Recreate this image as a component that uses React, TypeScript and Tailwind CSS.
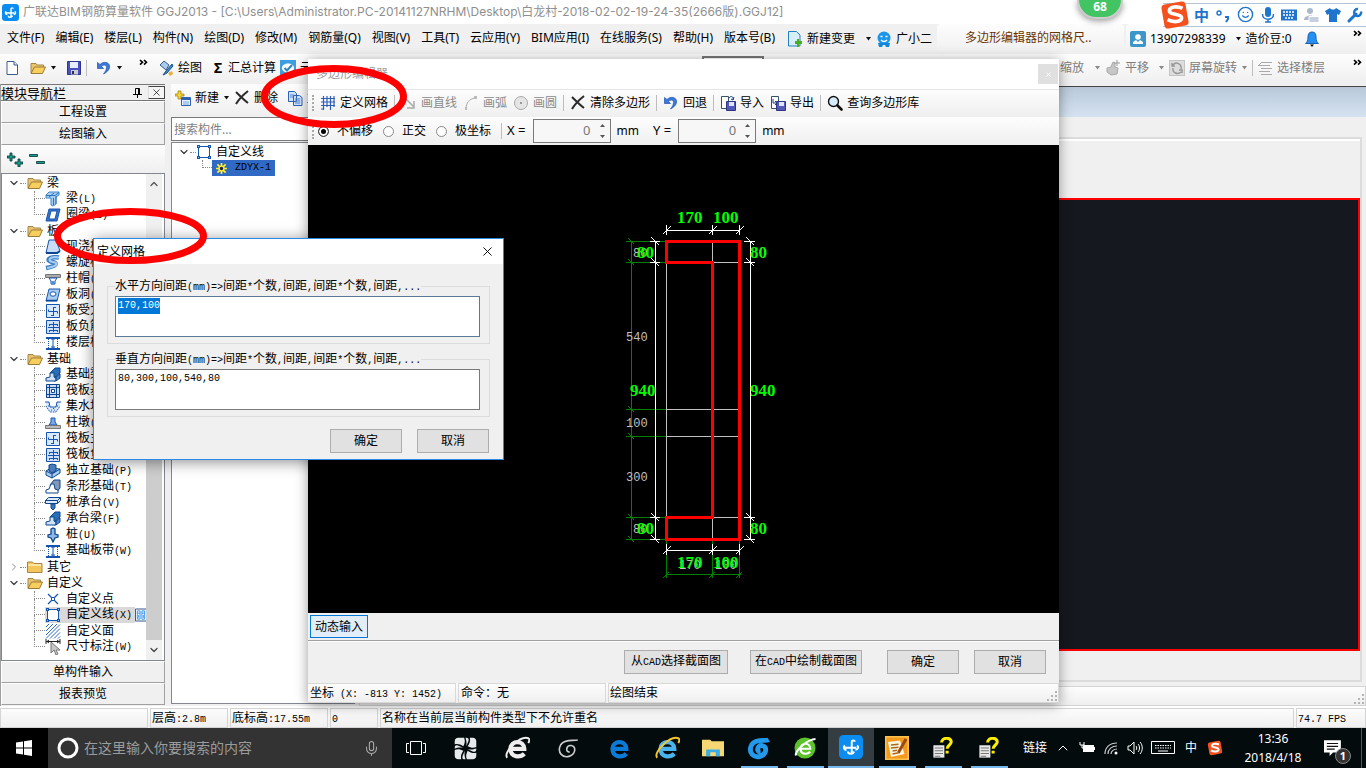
import { useEffect, useRef, useState } from "react";
import type { ReactNode } from "react";
import {
  ChevronDown,
  ChevronRight,
  ChevronUp,
  Mic,
  Smile,
  X,
} from "lucide-react";

type Row = {
  label: string;
  icon?: string;
  open?: boolean;
  last?: boolean;
  selected?: boolean;
};

const treeRows: Row[] = [
  { label: "梁", open: true },
  { label: "梁(L)", icon: "beam" },
  { label: "圈梁(E)", icon: "ring", last: true },
  { label: "板", open: true },
  { label: "现浇板(B)", icon: "slab" },
  { label: "螺旋板(B)", icon: "spiral" },
  { label: "柱帽(V)", icon: "cap" },
  { label: "板洞(N)", icon: "hole" },
  { label: "板受力筋(S)", icon: "rebar" },
  { label: "板负筋(F)", icon: "rebar2" },
  { label: "楼层板带(H)", icon: "strip", last: true },
  { label: "基础", open: true },
  { label: "基础梁(F)", icon: "fbeam" },
  { label: "筏板基础(M)", icon: "raft" },
  { label: "集水坑(K)", icon: "pit" },
  { label: "柱墩(Y)", icon: "pier" },
  { label: "筏板主筋(R)", icon: "rebar" },
  { label: "筏板负筋(X)", icon: "rebar2" },
  { label: "独立基础(P)", icon: "pad" },
  { label: "条形基础(T)", icon: "stripbase" },
  { label: "桩承台(V)", icon: "pilecap" },
  { label: "承台梁(F)", icon: "fbeam" },
  { label: "桩(U)", icon: "pile" },
  { label: "基础板带(W)", icon: "strip", last: true },
  { label: "其它", open: false },
  { label: "自定义", open: true },
  { label: "自定义点", icon: "point" },
  { label: "自定义线(X)", icon: "line", selected: true },
  { label: "自定义面", icon: "area" },
  { label: "尺寸标注(W)", icon: "dim", last: true },
];

const menus = [
  "文件(F)",
  "编辑(E)",
  "楼层(L)",
  "构件(N)",
  "绘图(D)",
  "修改(M)",
  "钢筋量(Q)",
  "视图(V)",
  "工具(T)",
  "云应用(Y)",
  "BIM应用(I)",
  "在线服务(S)",
  "帮助(H)",
  "版本号(B)",
];

const bar = "bg-linear-to-b from-[#fdfdfd] to-[#efefef]";
const pushButton =
  "h-6 border border-[#adadad] bg-[#e1e1e1] text-center text-xs leading-5";

// Latin runs are set in a narrower fixed width face, half of a Chinese character
const Song = ({ text }: { text: string }) => (
  <>
    {text.split(/([\x20-\x7e]+)/).map((part, i) =>
      i % 2 ? (
        <span
          key={i}
          className="font-['Liberation_Mono',monospace] text-[10px] whitespace-pre"
        >
          {part}
        </span>
      ) : (
        part
      )
    )}
  </>
);

const Svg = ({ children, size = 16 }: { children: ReactNode; size?: number }) => (
  <svg
    width={size}
    height={size}
    viewBox="0 0 16 16"
    fill="none"
    className="shrink-0"
    aria-hidden="true"
  >
    {children}
  </svg>
);

const Caret = ({ color = "#111" }: { color?: string }) => (
  <svg width="7" height="4" viewBox="0 0 7 4" className="shrink-0" aria-hidden="true">
    <path d="M1 0h5L3.5 3.5z" fill={color} />
  </svg>
);

const Divider = () => <span className="h-4 w-px shrink-0 bg-[#bdbdbd]" />;

const More = () => (
  <svg width="9" height="7" viewBox="0 0 9 7" fill="none" stroke="#000" strokeWidth="1.6" className="shrink-0" aria-hidden="true">
    <path d="M1 1l2.5 2.3L1 5.6M5 1l2.500 2.300L5 5.600" />
  </svg>
);

const Folder = ({ open }: { open?: boolean }) => (
  <Svg>
    {open ? (
      <>
        <path d="M1 13V3.500h5l1 1.500h6.500v3" fill="#e8c46a" stroke="#a5854a" />
        <path d="M1 13.500L4.500 7H15.500L12.500 13.500z" fill="#f8cf5a" stroke="#9a7b3c" />
      </>
    ) : (
      <>
        <path d="M.5 13.500V3h5L7 4.500h8v9z" fill="#f2c65a" stroke="#a5854a" />
        <path d="M1.500 6h12.500" stroke="#fff0b8" strokeWidth="1.500" />
      </>
    )}
  </Svg>
);

const NodeIcon = ({ name }: { name: string }) => {
  const b = "#1555b0";
  const l = "#a9ccf2";
  switch (name) {
    case "beam":
      return (
        <Svg>
          <path d="M1 4l3-3h10v3l-3 2v7l-3 2-2-1V7H1z" fill={l} stroke="#3d87c8" />
          <path d="M1 4.500h9l4-3M4 6l5-4M8.500 7v7M11 5v8" stroke="#2c73bb" />
        </Svg>
      );
    case "ring":
      return (
        <Svg>
          <path d="M4 2h11l-3 12H1z" fill="#3b72c4" stroke={b} />
          <path d="M6 4h6l-2 8H4z" fill="#fff" stroke={b} />
        </Svg>
      );
    case "slab":
      return (
        <Svg>
          <path d="M4 1h7l4 11-2 2H1z" fill="#c9dcf8" stroke={b} />
          <path d="M1 14h11l3-2" stroke="#0c4496" strokeWidth="2" />
        </Svg>
      );
    case "spiral":
      return (
        <Svg>
          <path d="M14 2.500C3 1 1 6 7 7s5 4-6 6" stroke="#3980c5" strokeWidth="4.500" />
          <path d="M14 2.500C4 1 2 6 8 7s5 4-6 6" stroke={l} strokeWidth="2.200" />
        </Svg>
      );
    case "cap":
      return (
        <Svg>
          <path d="M.5 3.500h15v3H.5z" fill="#aaa" stroke="#777" />
          <path d="M4 7h8l-2 3v3H6v-3z" fill="#fff" stroke={b} />
          <path d="M6.500 10h3v3.500h-3z" fill="#4f8dd8" />
        </Svg>
      );
    case "hole":
      return (
        <Svg>
          <path d="M4 2h11l-3 12H1z" fill={l} stroke={b} />
          <ellipse cx="8" cy="7" rx="3" ry="2.200" fill="#fff" stroke={b} />
          <path d="M1 13.500h11" stroke="#0c4496" strokeWidth="1.500" />
        </Svg>
      );
    case "rebar":
      return (
        <Svg>
          <path d="M1.500 1.500h13v13h-13z" fill="#d8e8ff" stroke={b} />
          <path d="M8.500 4v8.500M3.500 6.500v2h9v2M8 4.500h3M6 12.500h3" stroke={b} />
        </Svg>
      );
    case "rebar2":
      return (
        <Svg>
          <path d="M1.500 1.500h13v13h-13z" fill="#cfe0fb" stroke={b} />
          <path d="M8.500 3v10M4 5.500h9M3 8.500h11M4 11.500h9M4.500 5v2M12.500 5v2M4.500 11v2M12.500 11v2" stroke={b} />
        </Svg>
      );
    case "strip":
      return (
        <Svg>
          <path d="M1 3h14M1 14h14" stroke={b} strokeWidth="2" />
          <path d="M8 4v9M6 4h4M6 12h4" stroke={b} />
          <path d="M3.500 4v9M12.500 4v9" stroke={b} strokeDasharray="1 1" />
        </Svg>
      );
    case "fbeam":
      return (
        <Svg>
          <path d="M5 6l5-5h5v5l-5 4v4H9z" fill="#2c6db8" stroke="#0d468e" />
          <path d="M1 14v-3l4-1V6h4v4l2 1v3z" fill="#cfe2f8" stroke="#0d468e" />
          <path d="M11 14l4-3V7l-4 3z" fill="#4a86c9" stroke="#0d468e" />
        </Svg>
      );
    case "raft":
      return (
        <Svg>
          <path d="M1.500 1.500h13v13h-13z" fill="#c8dcf7" stroke="#0d468e" />
          <path d="M4.500 1.500v13M11.500 1.500v13M1.500 4.500h13M1.500 11.500h13" stroke="#0d468e" />
          <path d="M6.500 6.500h3v3h-3z" fill="#fff" stroke="#0d468e" />
        </Svg>
      );
    case "pit":
      return (
        <Svg>
          <path d="M1 3h3l2 5h4l2-5h3v6l-4 4H5L1 9z" fill="#d9e7fa" />
          <path d="M0 3h4l1 5h6l1-5h4" stroke={b} />
          <path d="M1 7l4 6h6l4-6M3 7h1M12 7h1M6 11h1M9 11h1M8 9.500h1" stroke={b} strokeDasharray="1.500 1" />
        </Svg>
      );
    case "pier":
      return (
        <Svg>
          <path d="M6 3h4v4l2 3H4l2-3z" fill="#7da8e4" stroke={b} />
          <path d="M.5 10.500h15v3H.5z" fill="#bbb" stroke="#777" />
        </Svg>
      );
    case "pad":
      return (
        <Svg>
          <path d="M1 8l5-3 9 1v4l-8 5-6-3z" fill={l} stroke="#0d468e" />
          <path d="M4 2l3-1 4 1v6l-4 2-3-2z" fill="#4a7ab8" stroke="#0d468e" />
          <path d="M1 8l6 3 8-5M7 11v4" stroke="#0d468e" />
        </Svg>
      );
    case "stripbase":
      return (
        <Svg>
          <path d="M5 6l4-5h6v8l-4 5z" fill="#8398b5" stroke="#0d468e" />
          <path d="M1 14v-3l3-1 2-5h3l1 5 3 1v3z" fill="#fff" stroke="#0d468e" />
        </Svg>
      );
    case "pilecap":
      return (
        <Svg>
          <path d="M.5 5.500l3-3h12v3l-3 3H.5z" fill="#dbe9fb" stroke="#0d468e" />
          <path d="M.5 5.500h12l3-3M12.500 5.500v3" stroke="#0d468e" />
          <path d="M6 9h4v4l-2 2-2-2z" fill="#3e76c0" stroke="#0d468e" />
        </Svg>
      );
    case "pile":
      return (
        <Svg>
          <path d="M6 2l2-1 2 1v5l3 1v2l-3 1-2 4-2-4-3-1V8l3-1z" fill="#8fb6e6" stroke="#0d468e" strokeWidth="1.300" />
        </Svg>
      );
    case "point":
      return (
        <Svg>
          <path d="M3 3l4 4M13 3L9 7M3 13l4-4M13 13L9 9" stroke={b} strokeWidth="1.200" />
          <path d="M6.500 6.500h3v3h-3z" fill="#fff" stroke={b} />
        </Svg>
      );
    case "line":
      return (
        <Svg>
          <path d="M2.500 2.500h11v11h-11z" fill="#fff" stroke={b} />
          <path d="M1 1h3v3H1zM12 1h3v3h-3zM1 12h3v3H1zM12 12h3v3h-3z" fill={b} />
          <path d="M2 2h1v1H2zM13 2h1v1h-1zM2 13h1v1H2zM13 13h1v1h-1z" fill="#9cc4ff" />
        </Svg>
      );
    case "area":
      return (
        <Svg>
          <path d="M1 4l3-3M1 8l7-7M1 12l11-11M1 15.500L15 1.500M5 15.500l10-10M9 15.500l6-6M13 15.500l2-2" stroke="#2c68bf" />
        </Svg>
      );
    default:
      return (
        <Svg>
          <path d="M1 0v5M15 0v5M1 2.500h14M4 1L2 2.500 4 4M12 1l2 1.500L12 4" stroke="#222" />
          <path d="M6 3v11l3-3 2 5 2-1-2-4h4z" fill="#c8c8c8" stroke="#777" />
        </Svg>
      );
  }
};

const NewDoc = () => (
  <Svg>
    <path d="M3 1.500h7l3.500 3.500v9.500h-10.500z" fill="#fff" stroke="#3f5c87" />
    <path d="M10 1.500V5h3.500" fill="#dce8f8" stroke="#3f5c87" />
  </Svg>
);

const Disk = () => (
  <Svg>
    <path d="M1.500 1.500h13v13h-13z" fill="#4a50c0" stroke="#2f3488" />
    <path d="M4 2h8v6H4z" fill="#e8ecff" />
    <path d="M5 10h7v4.500H5z" fill="#c9cbd8" />
    <path d="M6 11h2v3H6z" fill="#333" />
  </Svg>
);

const UndoIcon = () => (
  <Svg>
    <path d="M1.500 2.500v6h6l-2-2c2-2 5-2 5 1 0 2-1 4-3 6.500 4-2 6.500-5 6-8-.5-4-6-5-9.500-1.500z" fill="#3c79d8" stroke="#1d55ad" strokeWidth=".7" />
  </Svg>
);

const CrossIcon = () => (
  <Svg>
    <path d="M2 2c4 4 8 8 12 11M14 1C9 5 5 9 2 14" stroke="#2b2b2b" strokeWidth="2" />
  </Svg>
);

const SearchIcon = () => (
  <Svg>
    <circle cx="6.500" cy="6.500" r="5" fill="#d6ecfa" stroke="#111" strokeWidth="1.400" />
    <path d="M10.500 10.500l4 4" stroke="#111" strokeWidth="2.600" strokeLinecap="round" />
  </Svg>
);

const GridIcon = () => (
  <Svg>
    <path d="M3.500 1v14M7 1v11M10.500 1v14M14 1v11M1 3.500h14M1 7h14M1 10.500h14M1 14h3" stroke="#2d5fb8" strokeWidth="1.200" />
  </Svg>
);

const DiskArrow = ({ out }: { out?: boolean }) => (
  <Svg>
    <path d="M1.500 1.500h7v12h-7z" fill="#fff" stroke="#356" />
    <path d="M6.500 6.500h9v9h-9z" fill="#5259b9" stroke="#2f3480" />
    <path d="M9 7h5v4H9z" fill="#dfe3fb" />
    <path d={out ? "M3 4v4h4M5 6l2 2-2 2" : "M9 3c2-3 5-1 4 2M11 4l2 1 1-3"} stroke="#1b3c7c" />
  </Svg>
);

const GlodonIcon = ({ size = 16 }: { size?: number }) => (
  <Svg size={size}>
    <rect width="16" height="16" rx="3" fill="#0a8cf0" />
    <path d="M8.500 12V4.500c0-1.200 2-1.200 2 0M3 8.500h8.500M4 7c-1.500 1-.5 3 1 3M12 7c1.500 1 .5 3-1 2.500M6 11c0 2 3.500 2 4 0" stroke="#fff" strokeWidth="1.300" />
  </Svg>
);

const SogouIcon = ({ size = 16 }: { size?: number }) => (
  <Svg size={size}>
    <rect x="1.500" y="1.500" width="13" height="13" rx="2" fill="#f4511e" transform="rotate(-10 8 8)" />
    <path d="M12 4.500C9 3 5 3.500 5 5.800c0 2.400 6.500 1.200 6.500 3.700 0 2.400-4.500 2.500-7.500 1" stroke="#fff" strokeWidth="2" />
  </Svg>
);

const KeyboardIcon = ({ color }: { color: string }) => (
  <svg width="24" height="16" viewBox="0 0 24 16" fill="none" stroke={color} className="shrink-0" aria-hidden="true">
    <path d="M.5 1.500h23v12H.5z" />
    <path d="M4 5.500h16M4 8h16" strokeDasharray="1.500 1" />
    <path d="M7 11h10" />
  </svg>
);

function TreeRow({ row }: { row: Row }) {
  if (!row.icon) {
    return (
      <li className="flex h-4 items-center pl-1.5">
        {row.open ? (
          <ChevronDown size={12} strokeWidth={2.5} color="#404040" />
        ) : (
          <ChevronRight size={12} strokeWidth={2} color="#909090" />
        )}
        <span className="mr-px w-1.5 border-t border-dotted border-[#888]" />
        <Folder open={row.open} />
        <span className="pl-1">{row.label}</span>
      </li>
    );
  }
  return (
    <li className="flex h-4 items-center pl-8">
      <span className="flex h-4 w-[11px] shrink-0 flex-col">
        <span className="h-2 border-b border-l border-dotted border-[#888]" />
        {!row.last && <span className="h-2 border-l border-dotted border-[#888]" />}
      </span>
      <span className={`flex h-4 items-center whitespace-nowrap ${row.selected ? "bg-[#d9d9d9]" : ""}`}>
        <NodeIcon name={row.icon} />
        <span className="pr-[3px] pl-[5px]">
          <Song text={row.label} />
        </span>
      </span>
      {row.selected && (
        <svg width="12" height="16" viewBox="0 0 13 16" className="shrink-0" aria-hidden="true">
          <path d="M.5 1.500h12v13H.5z" fill="#fff" stroke="#234a80" />
          <path d="M2.500 3.500h3v9h-3zM7.500 3.500h3v9h-3zM2.500 6h3M7.500 6h3M4 8v3M9 8v3" fill="none" stroke="#2a8bea" />
        </svg>
      )}
    </li>
  );
}

function NavPanel() {
  const navButton =
    "h-[22px] w-full shrink-0 border border-t-white border-l-white border-r-[#a0a0a0] border-b-[#a0a0a0] bg-[#f0f0f0] text-xs leading-5";
  return (
    <aside className="flex w-[165px] shrink-0 flex-col border-l border-[#a0a0a0] bg-[#f0f0f0] pb-px">
      <div className="flex h-[17px] shrink-0 items-center justify-between border-y border-[#777]">
        <h2 className="text-[13px] leading-4">模块导航栏</h2>
        <span className="flex items-center gap-1.5">
          <svg width="9" height="10" viewBox="0 0 9 10" fill="none" stroke="#000" aria-hidden="true">
            <path d="M2.500 6V.5h4V6M5.500 1v5M0 6.500h9M4.500 7v3" />
          </svg>
          <button aria-label="关闭导航栏" className="border border-l-[#ddd] border-[#444] bg-[#f5f5f5] px-0.5">
            <X size={11} strokeWidth={1.5} />
          </button>
        </span>
      </div>
      <button className={navButton}>工程设置</button>
      <button className={navButton}>绘图输入</button>
      <div className={`flex h-7 shrink-0 items-center gap-1.5 pl-1.5 ${bar}`}>
        <Svg>
          <path d="M3 2h2v3h3v2H5v3H3V7H0V5h3zM11 8h2v3h3v2h-3v3h-2v-3H8v-2h3z" fill="#1a9c8c" stroke="#033" strokeWidth=".8" />
        </Svg>
        <Svg>
          <path d="M.5 3.500h8v2h-8zM7.500 10.500h8v2h-8z" fill="#1a9c8c" stroke="#033" strokeWidth=".8" />
        </Svg>
      </div>
      <div className="flex min-h-0 flex-1 border border-[#828790] bg-white">
        <ul className="min-w-0 flex-1 overflow-hidden pt-px text-xs leading-4">
          {treeRows.map((row) => (
            <TreeRow key={row.label} row={row} />
          ))}
        </ul>
        <div className="mr-0.5 flex w-4 shrink-0 flex-col items-center bg-[#f0f0f0]">
          <ChevronUp size={12} strokeWidth={2.5} color="#555" className="my-1 shrink-0" />
          <span className="h-16 shrink-0" />
          <span className="w-4 flex-1 bg-[#cdcdcd]" />
          <ChevronDown size={12} strokeWidth={2.5} color="#444" className="my-1 shrink-0" />
        </div>
      </div>
      <button className={navButton}>单构件输入</button>
      <button className={navButton}>报表预览</button>
    </aside>
  );
}

function MemberPanel() {
  return (
    <section className="ml-1.5 flex w-[184px] shrink-0 flex-col pb-0.5">
      <div className={`flex h-8 shrink-0 items-center gap-1 overflow-hidden pb-1 pl-1 whitespace-nowrap ${bar}`}>
        <Svg>
          <path d="M3 1h3v3h3v2H6v3H3V6H0V4h3z" fill="#f5d33c" stroke="#9c7a10" strokeWidth=".7" />
          <path d="M6.500 7.500h9v8h-9z" fill="#e8f1ff" stroke="#2e62b5" />
          <path d="M7 8h8v2H7z" fill="#2e62b5" />
          <path d="M8 12h6M8 14h6" stroke="#7ba4de" />
        </Svg>
        <button>新建</button>
        <Caret />
        <CrossIcon />
        <button>删除</button>
        <span className="w-px" />
        <Svg>
          <path d="M1.500 1.500h6l2 2v8h-8zM6.500 5.500h6l2.500 2v8H6.500z" fill="#cfe0fa" stroke="#2e62b5" />
          <path d="M3 5h4M3 7h3M8 9h5M8 11h5M8 13h5" stroke="#4e83cf" />
        </Svg>
        <button>复制</button>
      </div>
      <input
        aria-label="搜索构件"
        placeholder="搜索构件..."
        className="my-px h-6 border border-[#7a7a7a] bg-white px-0.5 text-xs outline-none placeholder:text-[#7f7f7f]"
      />
      <ul className="flex-1 border border-[#828790] bg-white pt-px pl-1.5 text-xs leading-4">
        <li className="flex h-4 items-center">
          <ChevronDown size={12} strokeWidth={2.5} color="#404040" />
          <span className="w-1.5 border-t border-dotted border-[#888]" />
          <NodeIcon name="line" />
          <span className="pl-1">自定义线</span>
        </li>
        <li className="flex h-4 items-center pl-6">
          <span className="mb-2 h-2 w-2.5 border-b border-l border-dotted border-[#888]" />
          <span className="flex h-4 items-center gap-2 bg-[#316ac5] px-1">
            <Svg size={11}>
              <path d="M8 0v16M0 8h16M2 2l12 12M14 2L2 14" stroke="#ffee33" strokeWidth="2.500" />
              <circle cx="8" cy="8" r="3.500" fill="#224" stroke="#ffee33" strokeWidth="2" />
            </Svg>
            <Song text="ZDYX-1" />
          </span>
        </li>
      </ul>
    </section>
  );
}

function TopBars() {
  const gray = "#8a8a8a";
  return (
    <header className="shrink-0">
      <div className="flex h-6 items-center gap-1 bg-white pl-0.5 text-[#8f8f8f]">
        <GlodonIcon size={17} />
        <h1 className="font-['Inter','Noto_Sans_CJK_SC',sans-serif] text-xs whitespace-nowrap">
          广联达BIM钢筋算量软件 GGJ2013 - [C:\Users\Administrator.PC-20141127NRHM\Desktop\白龙村-2018-02-02-19-24-35(2666版).GGJ12]
        </h1>
      </div>
      <div className="flex h-[30px] items-center bg-[#f0f0f0] whitespace-nowrap">
        <nav className="flex gap-[11px] pr-3 pb-0.5 pl-[7px]">
          {menus.map((m) => (
            <button key={m}>{m}</button>
          ))}
        </nav>
        <div className="flex w-[150px] shrink-0 items-center gap-1">
          <Svg>
            <path d="M1.500 .5h8l3.500 3.500v11h-11.500z" fill="#d9eefc" stroke="#2180c4" />
            <path d="M10 8h2v2h3v3h-3v3h-2v-3H8v-3h2z" fill="#49ad22" />
          </Svg>
          <button>新建变更</button>
          <span className="w-0.5" />
          <Caret />
          <Svg>
            <circle cx="8" cy="7" r="6.500" fill="#1b96e8" />
            <path d="M2 12h12l-1 4h-3l-1-2H7l-1 2H3z" fill="#1287db" />
            <path d="M4.500 5.500h2M9.500 5.500h2M5 9c2 2 4 2 6 0" stroke="#fff" strokeWidth="1.500" />
          </Svg>
          <button>广小二</button>
        </div>
        <div className={`h-full flex-1 rounded pl-7 leading-[28px] text-[#6b3300] ${bar}`}>多边形编辑器的网格尺..</div>
        <div className={`ml-0.5 flex h-full w-60 shrink-0 items-center gap-1 rounded pl-1 ${bar}`}>
          <Svg>
            <rect width="16" height="16" rx="2" fill="#3d96c8" />
            <circle cx="8" cy="6" r="2.800" fill="#fff" />
            <path d="M3 13v-2l3-2 2 2 2-2 3 2v2z" fill="#fff" />
          </Svg>
          <button>13907298339</button>
          <span className="w-px" />
          <Caret />
          <span>造价豆:0</span>
          <span className="w-1" />
          <Svg>
            <path d="M8 1c-3 0-4 2-4 5 0 4-1 5-2.500 6.500h13C13 11 12 10 12 6c0-3-1-5-4-5z" fill="#2490f5" stroke="#1a64ad" />
            <path d="M6 13.500h4L8 16z" fill="#111" />
          </Svg>
          <span className="ml-auto pr-1 pb-3">
            <More />
          </span>
        </div>
      </div>
      <div className={`flex h-[30px] items-center pb-0.5 whitespace-nowrap ${bar}`}>
        <div className="flex w-[154px] shrink-0 items-center gap-1 pl-1">
          <NewDoc />
          <span className="w-0.5" />
          <Folder open />
          <Caret />
          <span className="w-px" />
          <Disk />
          <Divider />
          <span className="w-px" />
          <UndoIcon />
          <Caret />
          <span className="ml-auto pr-1.5 pb-3">
            <More />
          </span>
        </div>
        <div className="flex items-center gap-1 pl-1">
          <Svg>
            <path d="M2 5l4-4 5 4-3 5z" fill="#a9cbec" stroke="#345e92" />
            <path d="M14 4l-6 7-3 4 4-2 6-7z" fill="#3f86cc" stroke="#1c4f88" />
            <path d="M10 13l4-2 1 3-3 2z" fill="#e6b03a" />
          </Svg>
          <button>绘图</button>
          <span className="w-1" />
          <span className="w-2.5 text-sm font-bold">Σ</span>
          <button>汇总计算</button>
          <Svg>
            <rect width="16" height="16" fill="#3b9fe0" />
            <path d="M2 8c0-6 12-6 12 0s-12 6-12 0z" fill="#fff" />
            <path d="M4.500 8L7 10.500 12 5" stroke="#2b83c0" strokeWidth="2" />
          </Svg>
          <button>云检查</button>
        </div>
        <span className="ml-[366px] h-6 w-[62px] border-2 border-[#777] bg-white" />
        <div className="ml-auto flex items-center gap-1 text-[#7d7d7d]">
          <button>缩放</button>
          <span className="w-0.5" />
          <Caret color={gray} />
          <Svg>
            <path d="M2 8l4-1 2-5 2 1v4l3 1-1 6-6 1-4-3z" fill="#c6c6c6" stroke="#aaa" />
            <path d="M12 0v6M9 3h6" stroke="#999" />
          </Svg>
          <button>平移</button>
          <span className="w-px" />
          <Caret color={gray} />
          <Svg>
            <rect x=".5" y=".5" width="15" height="15" fill="#ddd" stroke="#c4c4c4" />
            <path d="M4 5c3-4 9-1 8 4M12 12c-3 3-9 1-8-4M3 3v3h3M13 13v-3h-3" stroke="#999" strokeWidth="1.500" />
          </Svg>
          <button>屏幕旋转</button>
          <Caret color={gray} />
          <Divider />
          <Svg>
            <path d="M4 2.500h11M2 5.500h11M4 8.500h11M2 11.500h11M4 14.500h11M1 6l3-3" stroke="#aaa" />
          </Svg>
          <button>选择楼层</button>
        </div>
        <span className="mr-1 ml-7 pb-3">
          <More />
        </span>
      </div>
    </header>
  );
}

function DrawArea() {
  return (
    <main className="flex min-w-0 flex-1 flex-col border-t-2 border-[#f0f0f0] pl-1">
      <div className="h-[31px] shrink-0 border-t border-[#444] bg-linear-to-b from-[#b9c8d9] to-[#d5e3f1]" />
      <div className="mt-5 mr-1 flex min-h-0 flex-1 flex-col border-2 border-[#dcdcdc] bg-[#f0f0f0]">
        <div className="h-[59px] shrink-0 border-t-2 border-white" />
        <div className="min-h-0 flex-1 border-2 border-[#f00] bg-[#16181f]" />
        <div className="h-[29px] shrink-0" />
      </div>
      <div className={`mt-1 flex h-5 shrink-0 items-end justify-end border border-[#d4d4d4] ${bar}`}>
        <Grip />
      </div>
    </main>
  );
}

const Grip = () => (
  <svg width="12" height="12" viewBox="0 0 12 12" fill="#b4b4b4" aria-hidden="true">
    <path d="M9 1h2v2H9zM5 5h2v2H5zM9 5h2v2H9zM1 9h2v2H1zM5 9h2v2H5zM9 9h2v2H9z" />
  </svg>
);

const dimText = "fill-[#00ff00] font-['Liberation_Serif',serif] text-[17px] font-bold";
const axisText = "fill-[#c0c0c0] font-['Liberation_Mono',monospace] text-xs";

function SectionDrawing() {
  const axisY = [241, 262, 409, 436, 517, 539];
  const axisX = [666, 712, 739];
  const dimY = [241, 262, 517, 539];
  return (
    <svg viewBox="308 145 751 468" className="block h-[468px] w-full bg-black" role="img" aria-label="截面图">
      <g stroke="#c0c0c0" shapeRendering="crispEdges">
        {axisX.map((x) => (
          <path key={x} d={`M${x + 0.5} 241V539`} />
        ))}
        {axisY.map((y) => (
          <path key={y} d={`M666 ${y + 0.5}H739`} />
        ))}
      </g>
      <g stroke="#008000" fill="none">
        <path d="M631.5 241V540M666 574.5H741" />
        {axisY.map((y) => (
          <path key={y} d={`M626 ${y + 0.5}H666M628 ${y - 3}l6 6`} />
        ))}
        {axisX.map((x) => (
          <path key={x} d={`M${x + 0.5} 541V578M${x - 3} 578l6-6`} />
        ))}
      </g>
      <text x="626" y="341" className={axisText}>540</text>
      <text x="626" y="427" className={axisText}>100</text>
      <text x="626" y="481" className={axisText}>300</text>
      <text x="633" y="257" className={axisText}>80</text>
      <text x="633" y="533" className={axisText}>80</text>
      <text x="679" y="569" className={axisText}>170</text>
      <text x="715" y="569" className={axisText}>100</text>
      <g stroke="#fff" fill="none">
        <path d="M655.5 241V539M750.500 241V539M666 230.500H740M666 550.500H740" />
        {dimY.map((y) => (
          <path key={y} d={`M650 ${y + 0.5}h10M744 ${y + 0.5}h11M651 ${y - 4}l8 8M746 ${y - 4}l8 8`} />
        ))}
        {axisX.map((x) => (
          <path key={x} d={`M${x + 0.5} 225v10M${x + 0.5} 544v11M${x - 3} 234l8-8M${x - 3} 554l8-8`} />
        ))}
      </g>
      <text x="677" y="223" className={dimText}>170</text>
      <text x="713" y="223" className={dimText}>100</text>
      <text x="637" y="258" className={dimText}>80</text>
      <text x="750" y="258" className={dimText}>80</text>
      <text x="630" y="396" className={dimText}>940</text>
      <text x="750" y="396" className={dimText}>940</text>
      <text x="637" y="534" className={dimText}>80</text>
      <text x="750" y="534" className={dimText}>80</text>
      <text x="677" y="568" className={dimText}>170</text>
      <text x="713" y="568" className={dimText}>100</text>
      <path
        d="M666.500 241.500H739.500V539.500H666.500V517.500H712.500V262.500H666.500z"
        fill="none"
        stroke="#f00"
        strokeWidth="3"
      />
    </svg>
  );
}

function OffsetField({ label }: { label: string }) {
  return (
    <label className="flex items-center">
      <span className="text-[13px]">{label} =</span>
      <span className="mr-1.5 ml-[7px] flex h-6 w-[78px] items-center border border-[#7a7a7a] bg-[#f7f7f7] pr-1">
        <input defaultValue="0" className="min-w-0 flex-1 bg-transparent pr-2 text-right text-[13px] text-[#777] outline-none" />
        <svg width="7" height="16" viewBox="0 0 7 16" fill="#555" aria-hidden="true">
          <path d="M1 4l2.500-3L6 4zM1 12l2.500 3L6 12z" />
        </svg>
      </span>
      <span>mm</span>
    </label>
  );
}

function PolygonEditor() {
  const [mode, setMode] = useState("不偏移");
  const off = "flex items-center gap-1 text-[#8a8a8a]";
  const on = "flex items-center gap-1";
  return (
    <section className="absolute top-[59px] left-[308px] w-[751px] bg-[#f0f0f0] whitespace-nowrap shadow-[0_2px_12px_rgba(0,0,0,0.4)]">
      <div className="flex h-[30px] items-center justify-between bg-white pr-px pl-2 text-[#9a9a9a]">
        <h2>多边形编辑器</h2>
        <button aria-label="关闭编辑器" className="flex h-5 w-5 items-center justify-center bg-[#e0e0e0] text-white">
          <X size={7} strokeWidth={3} />
        </button>
      </div>
      <div className={`flex h-7 items-center gap-1.5 border-t border-[#e6e6e6] pb-0.5 ${bar}`}>
        <span className="ml-1 h-4 border-l-2 border-dotted border-[#aaa]" />
        <button className={on}><GridIcon />定义网格</button>
        <Divider />
        <button className={off}>
          <Svg><path d="M4 3l9 9M13 6v7H6" stroke="#aaa" strokeWidth="1.500" /></Svg>画直线
        </button>
        <button className={off}>
          <Svg><path d="M3 14c0-6 3-10 9-11" stroke="#aaa" /><path d="M2 12h2v3H2zM11 1h3v3h-3z" fill="#bbb" /></Svg>画弧
        </button>
        <button className={off}>
          <Svg><circle cx="8" cy="8" r="6.500" fill="#e5e5e5" stroke="#aaa" /><path d="M7 7h2v2H7z" fill="#999" /></Svg>画圆
        </button>
        <Divider />
        <button className={on}><CrossIcon />清除多边形</button>
        <Divider />
        <button className={on}><UndoIcon />回退</button>
        <Divider />
        <button className={on}><DiskArrow />导入</button>
        <button className={on}><DiskArrow out />导出</button>
        <Divider />
        <button className={on}><SearchIcon />查询多边形库</button>
      </div>
      <div className={`flex h-7 items-center ${bar}`}>
        <span className="mr-1 ml-1 h-4 border-l-2 border-dotted border-[#aaa]" />
        {["不偏移", "正交", "极坐标"].map((m) => (
          <label key={m} className="mr-2.5 flex items-center gap-2">
            <input
              type="radio"
              name="offset"
              checked={mode === m}
              onChange={() => setMode(m)}
              className="h-[11px] w-[11px] appearance-none rounded-full border border-[#888] bg-white checked:border-[#444] checked:bg-black checked:shadow-[inset_0_0_0_2px_#fff]"
            />
            {m}
          </label>
        ))}
        <Divider />
        <span className="ml-[5px] flex gap-3.5">
          <OffsetField label="X" />
          <OffsetField label="Y" />
        </span>
      </div>
      <SectionDrawing />
      <div className="flex h-7 items-center border-b border-[#a0a0a0] pl-0.5">
        <button className="h-[23px] border border-[#0078d7] bg-[#e1eef9] px-1 text-xs">动态输入</button>
      </div>
      <div className="flex h-[42px] items-center justify-end border-t border-white pr-[13px] pb-0.5">
        <button className={`${pushButton} mr-[22px] px-1.5`}><Song text="从CAD选择截面图" /></button>
        <button className={`${pushButton} mr-[25px] px-1`}><Song text="在CAD中绘制截面图" /></button>
        <button className={`${pushButton} mr-[15px] w-[72px]`}>确定</button>
        <button className={`${pushButton} w-[72px]`}>取消</button>
      </div>
      <div className={`flex h-5 items-stretch text-xs leading-[18px] ${bar}`}>
        <span className="w-[148px] border border-l-0 border-[#d8d8d8] pl-0.5"><Song text="坐标 (X: -813 Y: 1452)" /></span>
        <span className="ml-0.5 w-[148px] border border-[#d8d8d8] pl-0.5">命令：无</span>
        <span className="ml-0.5 flex flex-1 items-end justify-between border border-[#d8d8d8] pl-px">绘图结束<Grip /></span>
      </div>
    </section>
  );
}

function GridDialog() {
  const first = useRef<HTMLTextAreaElement>(null);

  useEffect(() => {
    first.current?.focus();
    first.current?.select();
  }, []);

  const box =
    "mt-0.5 block h-[41px] w-full resize-none border bg-white px-0.5 py-px font-['Liberation_Mono',monospace] text-[10px] leading-4 outline-none selection:bg-[#0078d7] selection:text-white";
  return (
    <section className="absolute top-[238px] left-[93px] w-[411px] border border-[#2a8ae6] bg-[#f0f0f0] text-xs whitespace-nowrap shadow-[0_2px_14px_rgba(0,0,0,0.45)]">
      <div className="flex h-[25px] items-center justify-between bg-white pr-2 pl-[3px]">
        <h2>定义网格</h2>
        <button aria-label="关闭"><X size={15} strokeWidth={1.5} /></button>
      </div>
      <div className="px-[13px] pt-3.5 pb-1.5">
        <fieldset className="h-[66px] border border-[#dcdcdc] pr-[9px] pl-[7px]">
          <legend className="h-4 leading-4">
            <label htmlFor="gx"><Song text="水平方向间距(mm)=>间距*个数,间距,间距*个数,间距,..." /></label>
          </legend>
          <textarea id="gx" ref={first} defaultValue="170,100" className={`${box} border-[#5a7a98]`} />
        </fieldset>
        <fieldset className="mt-[7px] h-[66px] border border-[#dcdcdc] pr-[9px] pl-[7px]">
          <legend className="h-4 leading-4">
            <label htmlFor="gy"><Song text="垂直方向间距(mm)=>间距*个数,间距,间距*个数,间距,..." /></label>
          </legend>
          <textarea id="gy" defaultValue="80,300,100,540,80" className={`${box} border-[#7a7a7a]`} />
        </fieldset>
        <div className="mt-3 flex justify-end gap-[15px] pr-px">
          <button className={`${pushButton} w-[72px]`}>确定</button>
          <button className={`${pushButton} w-[72px]`}>取消</button>
        </div>
      </div>
    </section>
  );
}

function ImeBar() {
  const c = "#1f74cc";
  return (
    <div className="absolute top-[3px] right-0 flex h-6 w-[203px] items-center border-y border-[#b4c4d4] bg-white">
      <span className="-my-2 -ml-1 flex w-8 shrink-0 justify-center"><SogouIcon size={30} /></span>
      <span className="flex flex-1 items-center justify-around text-[15px] font-bold text-[#1f74cc]">
        <span>中</span>
        <Svg>
          <circle cx="4" cy="6" r="2" stroke={c} strokeWidth="1.400" />
          <path d="M10 10h3v2l-2 3" stroke={c} strokeWidth="2" />
        </Svg>
        <Smile size={17} />
        <Svg>
          <rect x="5" y="0" width="6" height="10" rx="3" fill={c} />
          <path d="M2.500 7c0 7 11 7 11 0M8 12v3M5 15h6" stroke={c} strokeWidth="1.500" />
        </Svg>
        <Svg>
          <path d="M0 2.500h16v11H0z" fill={c} />
          <path d="M2 5h12M2 8h12M4 11h8" stroke="#fff" strokeWidth="1.500" strokeDasharray="2 1" />
        </Svg>
        <Svg>
          <circle cx="7" cy="4" r="3" fill="#aab8cc" />
          <path d="M1 13c0-6 12-6 12 0z" fill="#aab8cc" />
          <path d="M6 9.500h10v6H6z" fill="#c5cfde" stroke="#fff" />
        </Svg>
        <Svg>
          <path d="M5 1c1 2 5 2 6 0l5 3-2 4-2-1v8H4V7L2 8 0 4z" fill={c} />
        </Svg>
        <Svg>
          <path d="M2 14l7-7" stroke={c} strokeWidth="3" strokeLinecap="round" />
          <path d="M14 4.500A3.500 3.500 0 1 1 11 2" stroke={c} strokeWidth="2.500" />
        </Svg>
      </span>
    </div>
  );
}

function StatusBar() {
  const cell = "border border-[#d4d4d4] px-px leading-[18px]";
  return (
    <footer className={`flex h-[22px] shrink-0 items-stretch gap-0.5 border-t-2 border-white text-xs whitespace-nowrap ${bar}`}>
      <span className={`${cell} w-[148px]`} />
      <span className={`${cell} w-[78px]`}><Song text="层高:2.8m" /></span>
      <span className={`${cell} w-[98px]`}><Song text="底标高:17.55m" /></span>
      <span className={`${cell} w-12`}><Song text="0" /></span>
      <span className={`${cell} flex-1`}>名称在当前层当前构件类型下不允许重名</span>
      <span className={`${cell} w-[70px]`}><Song text="74.7 FPS" /></span>
    </footer>
  );
}

const EIcon = ({ color, ring }: { color: string; ring?: string }) => (
  <Svg size={26}>
    <path d="M4.500 8.500h8C12.500 3 4 3 4 8.500c0 5.500 6 5.500 8.500 3" stroke={color} strokeWidth="2.600" />
    {ring && <path d="M2 14C-1 11 10 0 15 2c1 .5.500 2 0 3" stroke={ring} strokeWidth="1.200" />}
  </Svg>
);

const Swirl = ({ color, width }: { color: string; width: number }) => (
  <Svg size={26}>
    <path d="M14 3c-2 1-8-1-10.500 3C1 11 5 14.500 9 13c4-1.500 4-6 1-6.500-3-.5-4 4-1 4" stroke={color} strokeWidth={width} />
  </Svg>
);

const HelpIcon = () => (
  <Svg size={22}>
    <path d="M1 6h8v9H1z" fill="#e8e8e8" />
    <path d="M2 8h6M2 10h6M2 12h6M2 14h4" stroke="#777" strokeWidth=".8" />
    <path d="M7 4c0-4 7-4 7-.5C14 6 11 6 11 8.500M11 10v2" stroke="#ffee00" strokeWidth="2.200" />
  </Svg>
);

function Taskbar() {
  const wide = "flex h-full w-[51px] items-center justify-center";
  const slot = "flex h-full w-[46px] items-center justify-center";
  const running = `${slot} bg-[linear-gradient(#76b9ed,#76b9ed)] bg-[length:37px_2px] bg-bottom bg-no-repeat`;
  return (
    <div className="flex h-10 shrink-0 items-center bg-[#030b0d] whitespace-nowrap text-white">
      <button aria-label="开始" className="flex h-full w-12 items-center justify-center bg-black">
        <Svg>
          <path d="M0 2.500L7 1.500V7.500H0zM8 1.300L16 0v7.500H8zM0 8.500h7v6l-7-1zM8 8.500h8V16l-8-1.300z" fill="#fff" />
        </Svg>
      </button>
      <label className="flex h-full w-[344px] items-center bg-[#333] pr-3 pl-2">
        <svg width="24" height="24" viewBox="0 0 24 24" fill="none" aria-hidden="true">
          <circle cx="12" cy="12" r="9" stroke="#fff" strokeWidth="3" />
        </svg>
        <input
          aria-label="搜索"
          placeholder="在这里输入你要搜索的内容"
          className="min-w-0 flex-1 bg-transparent pl-1 text-sm outline-none placeholder:text-[#9b9b9b]"
        />
        <Mic size={17} strokeWidth={1.5} color="#aaa" />
      </label>
      <button aria-label="任务视图" className="flex h-full w-12 items-center justify-center">
        <svg width="22" height="16" viewBox="0 0 22 16" fill="none" stroke="#fff" aria-hidden="true">
          <path d="M5.500 1.500h11v13h-11zM4 3.500H1.500v9H4M18 3.500h2.500v9H18" />
        </svg>
      </button>
      <button aria-label="风车" className={wide}>
        <Svg size={23}>
          <path d="M3 .5h4c1 2 .5 4-.5 6C4.500 5 2.500 4.500.500 5V3C.5 1.500 1.500.5 3 .5zM15.500 3v4c-2 1-4 .5-6-.5 1.500-2 2-4 1.500-6h2c1.500 0 2.500 1 2.500 2.500zM13 15.500H9c-1-2-.5-4 .5-6 2 1.500 4 2 6 1.500v2c0 1.500-1 2.500-2.500 2.500zM.5 13V9c2-1 4-.5 6 .5-1.500 2-2 4-1.500 6H3C1.500 15.500.5 14.500.5 13z" fill="#e6eaea" />
          <path d="M8 .5c2 0 2.500.5 2 2.500L8.500 6.500C9 4 8.500 2 8 .5zM15.500 8c0 2-.5 2.500-2.500 2L9.500 8.500c2.500.5 4.500 0 6-.500zM8 15.500c-2 0-2.500-.5-2-2.500l1.500-3.500C7 12 7.500 14 8 15.500zM.5 8c0-2 .5-2.500 2.500-2l3.500 1.500C4 7 2 7.500.5 8z" fill="#e6eaea" />
        </Svg>
      </button>
      <button aria-label="浏览器" className={wide}><EIcon color="#eee" ring="#eee" /></button>
      <button aria-label="广联达" className={wide}><Swirl color="#ccc" width={1} /></button>
      <button aria-label="Edge" className={wide}><EIcon color="#0b7bd8" /></button>
      <button aria-label="IE" className={slot}><EIcon color="#4ab3ee" ring="#f4c531" /></button>
      <button aria-label="文件夹" className={slot}>
        <Svg size={22}>
          <path d="M0 2h6l1 1h9v11H0z" fill="#f7d774" />
          <path d="M3 14V9h10v5h-3v-3H6v3z" fill="#38aee8" />
        </Svg>
      </button>
      <button aria-label="广联达G" className={running}><Swirl color="#2399ee" width={3} /></button>
      <button aria-label="安全浏览器" className={running}>
        <Svg size={24}>
          <circle cx="8" cy="8" r="7" fill="#5cc22a" />
          <path d="M5 8.500h6.500C11.500 4 5 4 5 8.500c0 4 4.500 4 6.500 2M2 13C1 10 10 2 15 2" stroke="#fff" strokeWidth="1.400" />
        </Svg>
      </button>
      <button aria-label="钢筋算量" className={`${slot} border-b-2 border-[#76b9ed] bg-[#343d42]`}><GlodonIcon size={24} /></button>
      <button aria-label="画图" className={running}>
        <Svg size={24}>
          <rect x=".5" y=".5" width="15" height="15" fill="#f39a1e" stroke="#ffc14d" />
          <path d="M2 4l8-1 3 9-9 2z" fill="#fff6e0" />
          <path d="M4 6l5-.500M4 8l5-.500M5 10l3-.500M5 12l5-1" stroke="#a86a22" />
          <path d="M14 2l-5 9" stroke="#9c4a10" strokeWidth="2" />
        </Svg>
      </button>
      <button aria-label="帮助1" className={running}><HelpIcon /></button>
      <button aria-label="帮助2" className={running}><HelpIcon /></button>
      <div className="ml-auto flex h-full items-center gap-2 text-xs">
        <span>链接</span>
        <ChevronUp size={16} strokeWidth={1.5} />
        <Svg>
          <path d="M4 5h11v7H4z" fill="#fff" />
          <path d="M1 2v3h4V2M3 5v3h3M15.500 7v3" stroke="#fff" />
        </Svg>
        <Svg>
          <path d="M2 14C2 7 7 3 14 3M5 14c0-5 4-8 9-8M8 14c0-3 3-5 6-5" stroke="#ccc" strokeWidth="1.200" />
          <circle cx="13" cy="13" r="1.500" fill="#fff" />
        </Svg>
        <Svg>
          <path d="M1 6h2l4-4v12l-4-4H1zM9 6c1 1 1 3 0 4M11 4c2 2 2 6 0 8M13 2c3 3 3 9 0 12" stroke="#fff" />
        </Svg>
        <KeyboardIcon color="#fff" />
        <span className="px-0.5">中</span>
        <SogouIcon />
        <time className="ml-2.5 w-16 text-center leading-[19px]">
          13:36
          <br />
          2018/4/18
        </time>
        <button aria-label="通知" className="relative flex h-full w-10 items-center justify-center">
          <Svg size={18}>
            <path d="M0 1h15v11H8l-3 3v-3H0z" fill="#fff" />
            <path d="M2.500 4h10M2.500 6.500h10M2.500 9h7" stroke="#111" />
          </Svg>
          <span className="absolute right-0.5 bottom-1 h-4 w-4 rounded-full border border-[#888] bg-[#333] text-[11px] leading-[14px] font-bold">1</span>
        </button>
        <span className="mr-1 h-full w-px bg-[#555]" />
      </div>
    </div>
  );
}

export default function App() {
  return (
    <div className="relative flex h-screen flex-col overflow-hidden bg-[#f0f0f0] font-['Noto_Sans','Noto_Sans_CJK_SC',sans-serif] text-xs text-black">
      <TopBars />
      <div className="flex min-h-0 flex-1">
        <NavPanel />
        <MemberPanel />
        <DrawArea />
      </div>
      <StatusBar />
      <Taskbar />

      <PolygonEditor />
      <GridDialog />
      <ImeBar />
      <div className="absolute top-0 left-[1077px] flex h-[19px] w-[46px] items-center justify-center rounded-b-full border-2 border-t-0 border-[#ccc] bg-[#43c463] pb-1 leading-[14px] font-bold text-white shadow-[0_2px_6px_rgba(0,0,0,0.4)]">
        68
      </div>
      <svg
        width="420"
        height="280"
        className="pointer-events-none absolute top-0 left-0"
        fill="none"
        stroke="#f00"
        strokeWidth="7"
        aria-hidden="true"
      >
        <ellipse cx="334" cy="96.500" rx="69.500" ry="28" />
        <ellipse cx="130.500" cy="236" rx="73" ry="24.500" />
      </svg>
    </div>
  );
}
